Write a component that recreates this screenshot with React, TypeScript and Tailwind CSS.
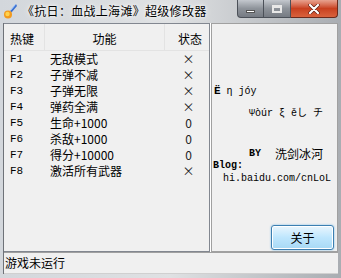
import React from 'react';

const rows = [
  { key: 'F1', name: '无敌模式', state: '×' },
  { key: 'F2', name: '子弹不减', state: '×' },
  { key: 'F3', name: '子弹无限', state: '×' },
  { key: 'F4', name: '弹药全满', state: '×' },
  { key: 'F5', name: '生命+1000', state: '0' },
  { key: 'F6', name: '杀敌+1000', state: '0' },
  { key: 'F7', name: '得分+10000', state: '0' },
  { key: 'F8', name: '激活所有武器', state: '×' },
];

const cjk = "font-['Noto_Sans_CJK_SC',sans-serif]";
const mono = "font-['Liberation_Mono','Noto_Sans_CJK_SC',monospace]";

const App: React.FC = () => {
  return (
    <div className="w-[341px] h-[278px] overflow-hidden bg-gradient-to-r from-[#d3d7dc] via-[#dfe1e3] to-[#a9adb2] flex flex-col text-black">
      {/* Title bar */}
      <div className="h-[23px] flex items-start shrink-0">
        <svg width="16" height="18" viewBox="0 0 16 18" className="ml-[2px] mt-[2px]">
          <path d="M14 2 L8 9 L9.5 10.5 L15 4 Z" fill="#3a6fd0" />
          <path d="M13.5 2.5 L8.5 8.5" stroke="#9cc4ff" strokeWidth="1" />
          <circle cx="6" cy="12.5" r="4" fill="#f29a1e" />
          <circle cx="5.5" cy="12" r="2.2" fill="#ffd34d" />
        </svg>
        <div
          className={`${cjk} ml-[4px] mt-[2px] text-[12px] leading-[18px] tracking-[0.3px] whitespace-nowrap [text-shadow:0_0_6px_#ffffff,0_0_3px_#ffffff]`}
        >
          《抗日：血战上海滩》超级修改器
        </div>
        <div className="ml-auto mr-[3px] flex">
          <div className="w-[27px] h-[18px] rounded-bl-[4px] border border-[#4b5058] border-t-0 bg-gradient-to-b from-[#c4c8ce] via-[#8e939a] to-[#767b83] flex items-end justify-center pb-[4px]">
            <div className="w-[9px] h-[3px] bg-white border border-[#555]" />
          </div>
          <div className="w-[27px] h-[18px] border-y border-r border-[#4b5058] border-t-0 bg-gradient-to-b from-[#c4c8ce] via-[#8e939a] to-[#767b83] flex items-center justify-center">
            <div className="w-[10px] h-[8px] border-[2px] border-t-[3px] border-[#e8e8e8]" />
          </div>
          <div className="w-[47px] h-[18px] rounded-br-[4px] border-y border-r border-[#6b2a1c] border-t-0 bg-gradient-to-b from-[#e7a28f] via-[#c8401f] to-[#d9623d] flex items-center justify-center">
            <svg width="12" height="10" viewBox="0 0 12 10">
              <path d="M2 1 L10 9 M10 1 L2 9" stroke="#5a1a10" strokeWidth="3.4" strokeLinecap="round" />
              <path d="M2 1 L10 9 M10 1 L2 9" stroke="#ffffff" strokeWidth="2.2" strokeLinecap="round" />
            </svg>
          </div>
        </div>
      </div>

      {/* Client area */}
      <div className="mx-[3px] h-[251px] bg-[#f0f0f0] flex flex-col shrink-0 border-l border-[#6e7278]">
        <div className="h-[229px] flex">
          {/* List view */}
          <div className="w-[206px] border border-[#828790] border-l-0 flex flex-col">
            <div className={`${cjk} h-[27px] flex text-[12px] border-b border-[#e3e3e3]`}>
              <div className="w-[41px] pl-[6px] pt-[6px] border-r border-[#e3e3e3]">热键</div>
              <div className="w-[120px] pt-[6px] text-center border-r border-[#e3e3e3]">功能</div>
              <div className="flex-1 pt-[6px] text-right pr-[7px]">状态</div>
            </div>
            {rows.map((r) => (
              <div key={r.key} className="h-[16px] flex text-[12px] leading-[16px]">
                <div className={`${mono} w-[41px] pl-[6px] text-[11px]`}>{r.key}</div>
                <div className={`${cjk} w-[120px] pl-[5px] whitespace-nowrap`}>{r.name}</div>
                <div className={`${cjk} flex-1 text-center pl-[3px] text-[#222]`}>{r.state}</div>
              </div>
            ))}
          </div>
          <div className="w-px bg-white" />
          {/* Right panel */}
          <div className={`${mono} flex-1 border border-[#a0a0a0] text-[10px] leading-[13px] flex flex-col`}>
            <div className="mt-[61px] ml-[2px] whitespace-pre">
              <span className="font-bold text-[11px]">Ë</span> η jóy
            </div>
            <div className="mt-[9px] ml-[37px] whitespace-pre">Ψòúr ξ ěし チ</div>
            <div className="mt-[27px] ml-[37px] flex items-center whitespace-pre">
              <span className="font-bold">BY</span>
              <span className={`${cjk} ml-[14px] text-[12px]`}>洗剑冰河</span>
            </div>
            <div className="mt-[-1px] ml-[1px] font-bold">Blog:</div>
            <div className="ml-[11px]">hi.baidu.com/cnLoL</div>
            <div className="mt-auto mb-[1px] mr-[3px] flex justify-end">
              <button
                className={`${cjk} w-[63px] h-[25px] rounded-[3px] border border-[#3c7fb1] bg-gradient-to-b from-[#eaf6fd] via-[#bee6fd] to-[#a7d9f5] shadow-[inset_0_0_0_1px_#ffffff,0_0_2px_#6cb6e6] text-[12px]`}
              >
                关于
              </button>
            </div>
          </div>
        </div>
        {/* Status bar */}
        <div className={`${cjk} h-[22px] border-t border-[#a0a0a0] border-b border-b-[#d0d0d0] text-[12px] leading-[20px] pl-[1px]`}>
          游戏未运行
        </div>
      </div>
      <div className="flex-1" />
    </div>
  );
};

export default App;
